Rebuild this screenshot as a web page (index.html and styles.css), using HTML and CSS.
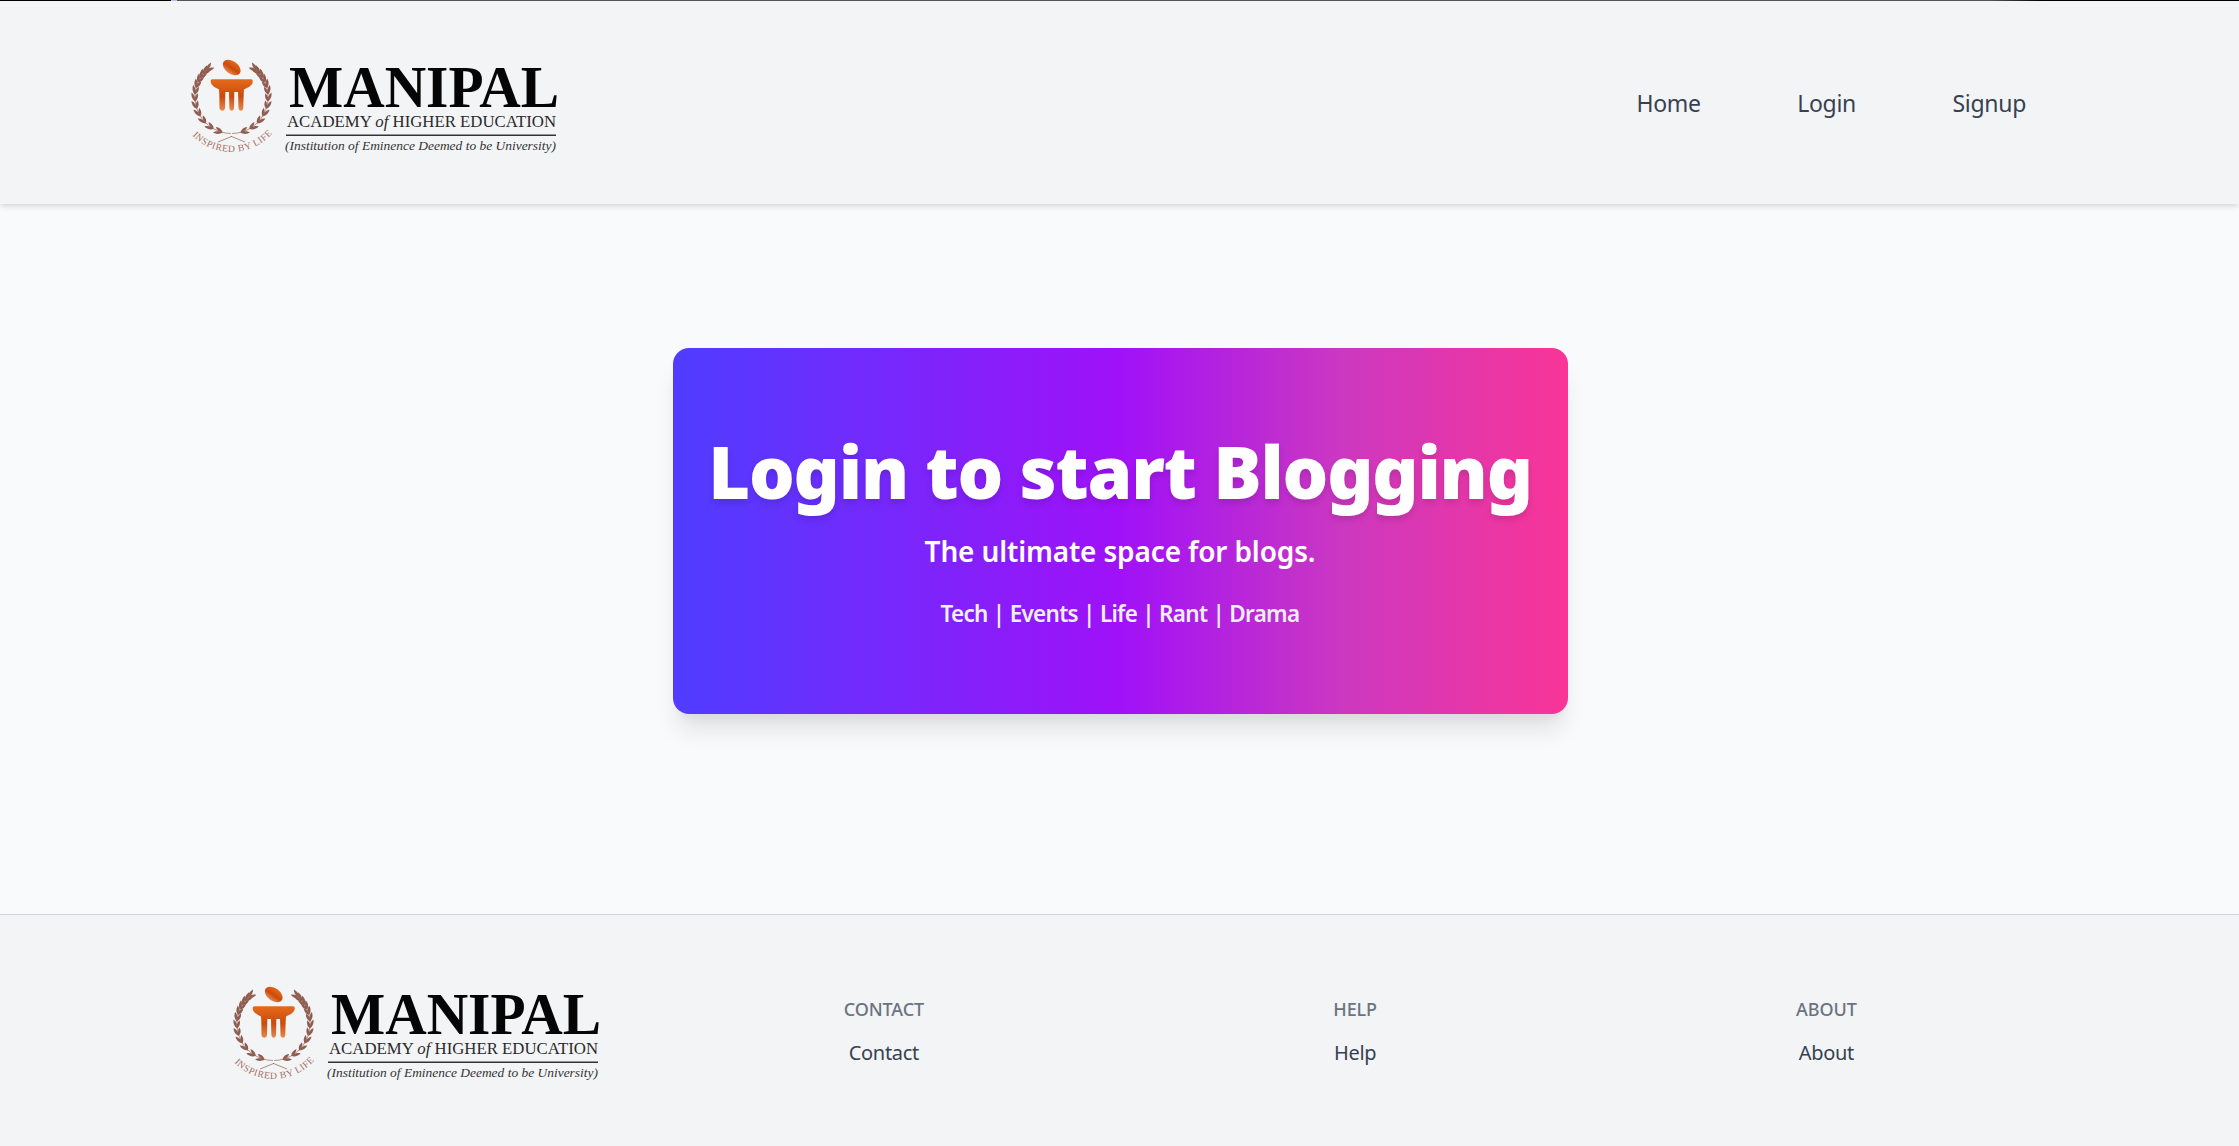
FILE: index.html
```html
<!DOCTYPE html>
<html lang="en">
<head>
<meta charset="utf-8">
<title>Manipal Blog</title>
<link rel="stylesheet" href="styles.css">
</head>
<body>
<svg class="defs" width="0" height="0" aria-hidden="true">
  <defs>
    <linearGradient id="orange" x1="0" y1="0" x2="0" y2="1">
      <stop offset="0" stop-color="#e56a1c"/>
      <stop offset="0.55" stop-color="#cb4a0c"/>
      <stop offset="1" stop-color="#e58a4c"/>
    </linearGradient>
    <g id="pair">
      <path d="M46.5 81.5C43 82 40 80.5 38 77.5 42 77 45 78.5 46.5 81.5Z"/>
      <path d="M46.5 81.5C43.5 84.5 40 85 36.5 84 39 81 43 80.5 46.5 81.5Z"/>
    </g>
    <g id="branch">
      <path class="stem" d="M60 87L46 81.3"/>
      <g transform="translate(3.2 2.9) scale(.93)">
        <path class="stem" d="M46 81.3A39.5 39.5 0 0 1 22 11"/>
        <use href="#pair" transform="rotate(14 46.5 42)"/>
        <use href="#pair" transform="rotate(29 46.5 42)"/>
        <use href="#pair" transform="rotate(44 46.5 42)"/>
        <use href="#pair" transform="rotate(58 46.5 42)"/>
        <use href="#pair" transform="rotate(71 46.5 42)"/>
        <use href="#pair" transform="rotate(83 46.5 42)"/>
        <use href="#pair" transform="rotate(94 46.5 42)"/>
        <use href="#pair" transform="rotate(104 46.5 42)"/>
        <use href="#pair" transform="rotate(113 46.5 42)"/>
        <use href="#pair" transform="rotate(121 46.5 42)"/>
        <use href="#pair" transform="rotate(129 46.5 42)"/>
        <use href="#pair" transform="rotate(136 46.5 42)"/>
      </g>
    </g>
    <g id="emblem">
      <g class="laurel">
        <use href="#branch"/>
        <use href="#branch" transform="translate(93 0) scale(-1 1)"/>
      </g>
      <ellipse cx="46.7" cy="12.5" rx="10" ry="6.3" transform="rotate(35 46.7 12.5)" fill="url(#orange)"/>
      <path d="M27.5 24.3H66C68 24.3 68.3 27 67 29 65.5 31.5 62 33 59 34.5 58.5 41 58.5 47 58.3 53 58 56.5 53.8 56.5 53.5 53 53.3 47 53.3 42 53 37H49.3C49.2 43 49.2 48 49 53 48.7 56.5 44.7 56.5 44.4 53 44.2 48 44.2 43 44 37H40.4C40.2 43 40.2 48 40 53 39.7 56.5 34.8 56.5 34.5 53 34.3 47 34.6 41 34 34.5 31 33 28 31.5 26.4 29 25.2 27 25.5 24.3 27.5 24.3Z" fill="url(#orange)"/>
      <path id="motto" class="none" d="M1.5 73.5A55 55 0 0 0 91.5 73.5"/>
    </g>
  </defs>
</svg>

<div class="topline"></div>

<header class="site-header">
  <a class="brand" href="#">
    <svg class="logo" viewBox="0 0 380 110" width="380" height="110" role="img" aria-label="Manipal Academy of Higher Education">
      <use href="#emblem"/>
      <text class="motto"><textPath href="#motto" startOffset="9">INSPIRED BY LIFE</textPath></text>
      <text class="l-name" x="104" y="52" textLength="270" lengthAdjust="spacingAndGlyphs">MANIPAL</text>
      <text class="l-sub" x="102" y="72" textLength="269" lengthAdjust="spacingAndGlyphs">ACADEMY <tspan class="l-of">of</tspan> HIGHER EDUCATION</text>
      <rect class="l-rule" x="101" y="79.5" width="270" height="1.5"/>
      <text class="l-note" x="100" y="95" textLength="271" lengthAdjust="spacingAndGlyphs">(Institution of Eminence Deemed to be University)</text>
    </svg>
  </a>
  <nav class="site-nav">
    <a href="#">Home</a>
    <a href="#">Login</a>
    <a href="#">Signup</a>
  </nav>
</header>

<main class="hero-wrap">
  <section class="hero">
    <h1>Login to start Blogging</h1>
    <p class="tagline">The ultimate space for blogs.</p>
    <p class="topics">Tech | Events | Life | Rant | Drama</p>
  </section>
</main>

<footer class="site-footer">
  <div class="foot-col foot-brand">
    <svg class="logo" viewBox="0 0 380 110" width="380" height="110" role="img" aria-label="Manipal Academy of Higher Education">
      <use href="#emblem"/>
      <text class="motto"><textPath href="#motto" startOffset="9">INSPIRED BY LIFE</textPath></text>
      <text class="l-name" x="104" y="52" textLength="270" lengthAdjust="spacingAndGlyphs">MANIPAL</text>
      <text class="l-sub" x="102" y="72" textLength="269" lengthAdjust="spacingAndGlyphs">ACADEMY <tspan class="l-of">of</tspan> HIGHER EDUCATION</text>
      <rect class="l-rule" x="101" y="79.5" width="270" height="1.5"/>
      <text class="l-note" x="100" y="95" textLength="271" lengthAdjust="spacingAndGlyphs">(Institution of Eminence Deemed to be University)</text>
    </svg>
  </div>
  <div class="foot-col">
    <h2>Contact</h2>
    <a href="#">Contact</a>
  </div>
  <div class="foot-col">
    <h2>Help</h2>
    <a href="#">Help</a>
  </div>
  <div class="foot-col">
    <h2>About</h2>
    <a href="#">About</a>
  </div>
</footer>
</body>
</html>
```
FILE: styles.css
```css
* { box-sizing: border-box; }
html, body { margin: 0; padding: 0; }
body {
  width: 2239px;
  height: 1146px;
  overflow: hidden;
  background: #f9fafb;
  font-family: "Noto Sans", "Open Sans", sans-serif;
  color: #374151;
}
a { text-decoration: none; color: inherit; }
.defs { display: block; height: 0; }
.none { fill: none; }

.topline {
  height: 1px;
  background: linear-gradient(to right, #000 0 171px, #a8c8f0 171px 177px, #555750 177px 1990px, #000 2043px);
}

.site-header {
  position: relative;
  z-index: 2;
  height: 203px;
  display: flex;
  align-items: center;
  justify-content: space-between;
  padding: 0 213px 0 185px;
  background: #f3f4f6;
  box-shadow: 0 4px 6px -1px rgba(0,0,0,.1), 0 2px 4px -1px rgba(0,0,0,.06);
}
.brand { display: block; height: 110px; margin-top: 15px; box-sizing: content-box; }
.logo { display: block; }
.site-nav { display: flex; gap: 96.5px; font-size: 23px; letter-spacing: -.3px; line-height: 32px; }

.laurel { fill: #8f5d50; }
.stem { fill: none; stroke: #8f5d50; stroke-width: .7; }
.motto { font-family: "Liberation Serif", serif; font-size: 9.6px; letter-spacing: .55px; fill: #a56f60; }
.l-name { font-family: "Liberation Serif", serif; font-weight: 700; font-size: 60px; fill: #050505; }
.l-sub { font-family: "Liberation Serif", serif; font-size: 17px; fill: #2a2a2a; }
.l-of { font-style: italic; }
.l-rule { fill: #333; }
.l-note { font-family: "Liberation Serif", serif; font-style: italic; font-size: 13.5px; fill: #333; }

.hero-wrap {
  height: 710px;
  display: flex;
  justify-content: center;
  padding: 144px 0 0 1px;
}
.hero {
  width: 895px;
  height: 366px;
  padding-top: 78px;
  border-radius: 16px;
  color: #fff;
  text-align: center;
  background: linear-gradient(to right, #4f3dff, #a011f8 50%, #cc38c0 75%, #f93597);
  box-shadow: 0 20px 25px -5px rgba(0,0,0,.1), 0 10px 10px -5px rgba(0,0,0,.04);
}
.hero h1 {
  margin: 0;
  font-size: 72px;
  line-height: 90px;
  font-weight: 900;
  letter-spacing: -1.2px;
  text-shadow: 0 4px 6px rgba(0,0,0,.12);
}
.tagline { margin: 17px 0 0; font-size: 28px; line-height: 36px; font-weight: 600; letter-spacing: -.15px; }
.topics { margin: 31px 0 0; font-size: 22.5px; line-height: 28px; font-weight: 600; letter-spacing: -.72px; color: #eeeef8; }

.site-footer {
  height: 232px;
  display: grid;
  grid-template-columns: repeat(4, 1fr);
  padding: 82px 177px 0;
  border-top: 1px solid #d1d5db;
  background: #f3f4f6;
  text-align: center;
}
.foot-brand { display: flex; justify-content: center; padding: 0 0 0 9px; margin-top: -15px; }
.foot-col h2 {
  margin: 0;
  font-size: 18px;
  line-height: 24px;
  font-weight: 500;
  text-transform: uppercase;
  letter-spacing: -.1px;
  color: #6b7280;
}
.foot-col a { display: block; margin-top: 20px; font-size: 20px; line-height: 24px; letter-spacing: -.3px; }
```
